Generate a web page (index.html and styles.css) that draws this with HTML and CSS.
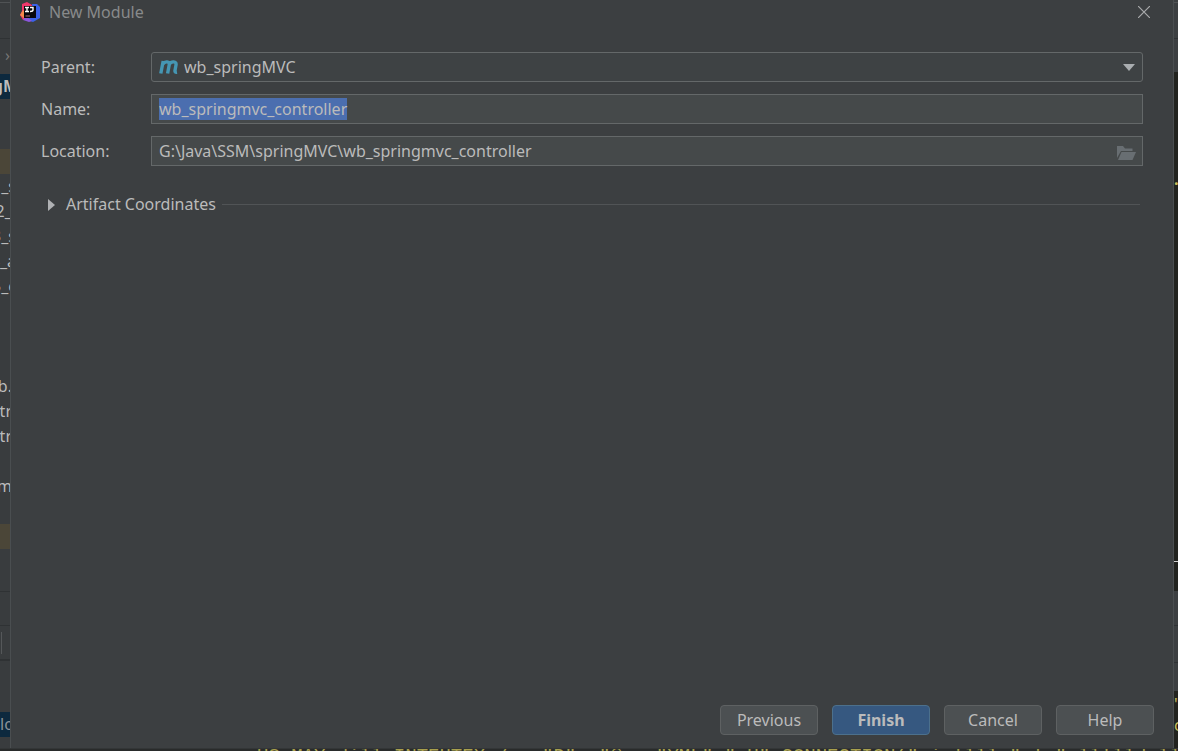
FILE: index.html
```html
<!DOCTYPE html>
<html lang="en">
<head>
<meta charset="utf-8">
<title>New Module</title>
<link rel="stylesheet" href="styles.css">
</head>
<body>
<div class="ide">
  <aside class="project">
    <div class="bar bar-menu"></div>
    <div class="bar bar-nav"></div>
    <div class="bar bar-tools"><span>›</span></div>
    <ul class="tree">
      <li class="picked">gM</li><li></li><li></li><li class="marked"></li>
      <li class="module">_s</li><li class="module">2_l</li><li class="module">3_s</li><li class="module">4_a</li><li class="module">5_c</li>
      <li></li><li></li><li></li>
      <li>b.</li><li>ntr</li><li>ntr</li><li></li><li>m</li><li></li>
      <li class="marked"></li>
    </ul>
    <div class="bar bar-gap"></div>
    <div class="bar bar-tabs"></div>
    <div class="bar bar-run"><i></i></div>
    <div class="bar bar-log"></div>
    <div class="console-item">lo</div>
  </aside>

  <main class="dialog">
    <header class="titlebar">
      <svg class="logo" viewBox="0 0 20 20" aria-hidden="true">
        <path d="M2 2 7 0l5 3-1 9-8 6-3-5 2-4z" fill="#f0366b"/>
        <path d="M0 13l3-5 4 4-2 5z" fill="#f58a4b"/>
        <path d="M12 2l5 0 3 3v11l-7 4-6-2 2-4 4-3z" fill="#3b62e8"/>
        <path d="M3 18l3-4 6 5-3 1z" fill="#8b57dc"/>
        <rect x="4" y="4" width="12" height="12" fill="#08080c"/>
        <path d="M5 5.500h4M7 5.500v4M5 9.500h4M10 5.500h3v2.500q0 1.500-3 1.500" fill="none" stroke="#fff" stroke-width="1.400"/>
        <path d="M5.500 14h4.500" stroke="#b5737d" stroke-width="1"/>
      </svg>
      <h1>New Module</h1>
      <button class="close" type="button" aria-label="Close">
        <svg viewBox="0 0 12 12" aria-hidden="true"><path d="M0 0l12 12M12 0L0 12" fill="none" stroke="#a9abac" stroke-width="1.200"/></svg>
      </button>
    </header>

    <form class="form">
      <label for="parent">Parent:</label>
      <div class="field">
        <select id="parent"><option>wb_springMVC</option></select>
        <svg class="maven" viewBox="0 0 20 14" aria-hidden="true">
          <path d="M1.800 13.500 4.200 1M3.500 4.500Q5.500 1.700 8 1.900 10.700 2.200 10.200 5L8.600 13.500M10 4.500Q12 1.700 14.600 1.900 17.500 2.200 17 5L16 10.500Q15.600 12.600 18 12.200" fill="none" stroke="#4596b3" stroke-width="3.400"/>
        </svg>
        <svg class="arrow" viewBox="0 0 12 7" aria-hidden="true"><path d="M0 0h12L6 7z" fill="#a9adb0"/></svg>
      </div>

      <label for="name">Name:</label>
      <div class="field"><input id="name" type="text" value="wb_springmvc_controller" spellcheck="false"></div>

      <label for="location">Location:</label>
      <div class="field">
        <input id="location" type="text" value="G:\Java\SSM\springMVC\wb_springmvc_controller" spellcheck="false">
        <button class="browse" type="button" aria-label="Browse">
          <svg viewBox="0 0 19 14" aria-hidden="true"><path d="M0 12V0h6l2 2.500h7.500V5H4zM4.500 6H19l-3.500 8H1z" fill="#686e72"/></svg>
        </button>
      </div>
    </form>

    <div class="section">
      <button class="toggle" type="button" aria-expanded="false">
        <svg viewBox="0 0 7 12" aria-hidden="true"><path d="M0 0l7 6-7 6z" fill="#afb1b3"/></svg>
        Artifact Coordinates
      </button>
      <hr>
    </div>

    <footer class="actions">
      <button type="button">Previous</button>
      <button type="button" class="primary">Finish</button>
      <button type="button">Cancel</button>
      <button type="button">Help</button>
    </footer>
  </main>

  <aside class="editor">
    <div class="bar bar-menu"></div>
    <div class="bar bar-nav"></div>
    <div class="code code-top"><b>.</b></div>
    <div class="code code-caret"></div>
    <div class="bar bar-status"></div>
    <div class="bar bar-tabs"></div>
    <div class="bar bar-head"></div>
    <div class="code code-output"><span>"</span><span>c</span></div>
  </aside>

  <div class="output">US MAY dill INTEHTEX /as "D": "@m, "YML" "nU" CONNECTION(" i 'lll "n'n" ll'lld ll</div>
</div>
<script src="main.js"></script>
</body>
</html>
```
FILE: styles.css
```css
* { box-sizing: border-box; }
body {
  margin: 0;
  background: #3c3f41;
  color: #bbbbbb;
  font: 16px/21px "Noto Sans", "Open Sans", sans-serif;
}
button, input, select { font: inherit; color: inherit; }
.ide {
  display: grid;
  grid-template-columns: 11px minmax(0, 1fr) 4px;
  grid-template-rows: minmax(0, 1fr) 3px;
  height: 100vh;
  overflow: hidden;
}

/* Slices of the main window around the dialog */
.project, .editor {
  display: flex;
  flex-direction: column;
  overflow: hidden;
}
.project { background: #393c3e; border-right: 1px solid #4a4e50; }
.bar { flex: none; border-bottom: 1px solid #2f3234; }
.bar-menu { height: 3px; border-color: #505355; }
.bar-nav { height: 36px; }
.bar-tools { height: 35px; border: 0; padding-top: 6px; color: #777; text-align: right; }
.tree { margin: 0; padding: 0; list-style: none; }
.tree li {
  display: flex;
  justify-content: flex-end;
  height: 25px;
  line-height: 25px;
  margin-right: -2px;
}
.tree .module { margin-right: -6px; }
.tree .picked { background: #0d293e; font-weight: bold; margin-right: -8px; }
.tree .marked { background: #4b4638; }
.bar-gap { height: 43px; }
.bar-tabs { height: 34px; }
.bar-run { height: 35px; padding: 6px 0 5px 1px; border-bottom: 2px solid #2f3234; }
.bar-run i { display: block; height: 22px; border-left: 1px solid #55585a; }
.bar-log { height: 51px; border: 0; }
.console-item { background: #0d293e; height: 25px; line-height: 25px; color: #8b9298; flex: none; }
.editor .bar-nav { margin-bottom: 33px; }
.code { background: #22231f; color: #c9bd5b; overflow: hidden; flex: none; }
.code-top { height: 489px; padding-top: 97px; }
.code-top b { display: block; }
.code-caret { height: 30px; border-top: 1px solid #d0d0d0; }
.bar-status { height: 35px; }
.editor .bar-tabs { height: 37px; }
.editor .bar-head { height: 28px; border: 0; }
.code-output { flex: 1; padding-top: 3px; }
.code-output span { display: block; }
.output {
  grid-column: 1 / -1;
  background: #292b2b;
  border-top: 1px solid #333637;
  color: #a9a04d;
  font: 19px/14px "Liberation Mono", monospace;
  padding-left: 257px;
  white-space: pre;
  overflow: hidden;
}

/* Dialog */
.dialog {
  display: flex;
  flex-direction: column;
  min-width: 0;
  background: #3c3f41;
  border-right: 1px solid #4a4e50;
}
.titlebar {
  display: flex;
  align-items: center;
  height: 24px;
  padding: 0 23px 0 9px;
  gap: 9px;
}
.logo { width: 20px; height: 20px; }
.titlebar h1 { flex: 1; margin: 0; font-size: 16px; font-weight: normal; color: #888a8b; }
.close { display: grid; padding: 0; border: 0; background: none; }
.close svg { width: 12px; height: 12px; }
.form {
  display: grid;
  grid-template-columns: 110px minmax(0, 1fr);
  grid-auto-rows: 30px;
  row-gap: 12px;
  align-items: center;
  padding: 28px 30px 0 30px;
}
.field { position: relative; height: 30px; }
.field select, .field input {
  display: block;
  width: 100%;
  height: 100%;
  margin: 0;
  padding: 0 7px;
  border: 1px solid #646869;
  border-radius: 0;
  background: #45494a;
  outline: none;
}
.field select {
  appearance: none;
  padding-left: 32px;
  border-radius: 3px;
  background: #3e4244;
}
.field input::selection { background: #4b6eaf; color: #bbbbbb; }
.maven { position: absolute; left: 8px; top: 8px; width: 20px; height: 14px; }
.arrow { position: absolute; right: 8px; top: 12px; width: 12px; height: 7px; }
.browse { position: absolute; right: 7px; top: 10px; display: grid; padding: 0; border: 0; background: none; }
.browse svg { width: 19px; height: 14px; }
.section { display: flex; align-items: center; gap: 6px; padding: 28px 33px 0 37px; }
.toggle {
  display: flex;
  align-items: center;
  gap: 11px;
  padding: 0;
  border: 0;
  background: none;
  white-space: nowrap;
}
.toggle svg { width: 7px; height: 12px; }
.section hr { flex: 1; margin: 0; border: 0; border-top: 1px solid #515456; }
.actions {
  display: flex;
  justify-content: flex-end;
  gap: 14px;
  margin-top: auto;
  padding: 0 19px 13px;
}
.actions button {
  width: 98px;
  height: 30px;
  padding: 0;
  border: 1px solid #5e6162;
  border-radius: 4px;
  background: #4c5052;
}
.actions .primary { background: #365880; border-color: #4c708c; font-weight: bold; }
```
FILE: main.js
```js
const nameField = document.getElementById("name");
nameField.focus();
nameField.select();
```
